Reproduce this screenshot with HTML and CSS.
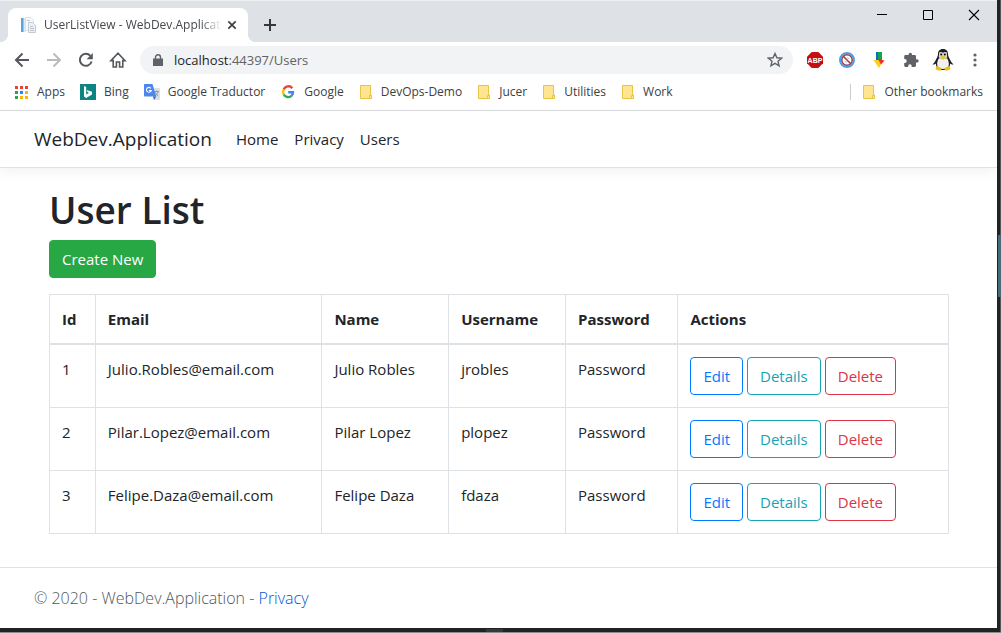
FILE: index.html
```html
<!DOCTYPE html>
<html lang="en">
<head>
<meta charset="utf-8">
<title>UserListView - WebDev.Application</title>
<link rel="stylesheet" href="styles.css">
</head>
<body>
<svg class="sprite" aria-hidden="true">
  <symbol id="folder" viewBox="0 0 14 16"><path d="M1.500 1.500h10v9.500h1v3.500h-11z" fill="#ffe591" stroke="#e8c547"/><path d="M10.500 14.500v-3h2v3z" fill="#ffe591" stroke="#e8c547"/></symbol>
</svg>
<div class="desktop">
  <div class="window">
    <header class="tab-strip">
      <div class="tab">
        <svg class="tab-icon" width="16" height="16" viewBox="0 0 16 16"><path d="M1 1h4v14H1z" fill="#5aa5d8"/><path d="M3.500 1H6v14H3.500z" fill="#dbe9f3"/><path d="M5.500 .5H11l2.500 3v10h-8z" fill="#f6f8fa" stroke="#dde1e5"/><path d="M8.500 5.500h4l3 3v7h-7z" fill="#eef1f4" stroke="#c3cad1"/><path d="M7 3.500h3M10 9.500h3M10 11.500h4M10 13.500h4" stroke="#b9c4ce"/></svg>
        <span class="tab-title">UserListView - WebDev.Application</span>
        <button class="icon-button tab-close" aria-label="Close tab"><svg width="10" height="10" viewBox="0 0 10 10"><path d="M1.300 1.300l7.400 7.400M8.700 1.300L1.300 8.700" stroke="#3c4043" stroke-width="1.700"/></svg></button>
      </div>
      <button class="icon-button new-tab" aria-label="New tab"><svg width="12" height="12" viewBox="0 0 12 12"><path d="M6 0v12M0 6h12" stroke="#35383b" stroke-width="2"/></svg></button>
      <div class="window-controls">
        <button class="icon-button" aria-label="Minimize"><svg width="10" height="10" viewBox="0 0 10 10"><path d="M0 4.500h10" stroke="#000"/></svg></button>
        <button class="icon-button" aria-label="Maximize"><svg width="10" height="10" viewBox="0 0 10 10"><path d="M.5.5h9v9h-9z" fill="none" stroke="#000"/></svg></button>
        <button class="icon-button" aria-label="Close"><svg width="12" height="12" viewBox="0 0 12 12"><path d="M1 1l10 10M11 1L1 11" stroke="#000" stroke-width="1.100"/></svg></button>
      </div>
    </header>

    <div class="toolbar">
      <div class="nav-buttons">
        <button class="icon-button" aria-label="Back"><svg width="16" height="16" viewBox="0 0 16 16"><path d="M15 8H2M8.500 1.500L2 8l6.500 6.500" fill="none" stroke="#55585c" stroke-width="2"/></svg></button>
        <button class="icon-button" aria-label="Forward"><svg width="16" height="16" viewBox="0 0 16 16"><path d="M1 8h13M7.500 1.500L14 8l-6.500 6.500" fill="none" stroke="#b9bbbd" stroke-width="2"/></svg></button>
        <button class="icon-button" aria-label="Reload"><svg width="16" height="16" viewBox="0 0 16 16"><path d="M13.600 9.500A6 6 0 1 1 12.400 3.900" fill="none" stroke="#55585c" stroke-width="2"/><path d="M14.800 1v6.200H8.600z" fill="#55585c"/></svg></button>
        <button class="icon-button" aria-label="Home"><svg width="18" height="18" viewBox="0 0 18 18"><path d="M2 9.600L9 2.200l7 7.400h-2.200V16h-3.200v-5H7.400v5H4.200V9.600z" fill="none" stroke="#55585c" stroke-width="1.600"/></svg></button>
      </div>
      <div class="omnibox">
        <svg width="10" height="13" viewBox="0 0 10 13"><path d="M0 4.500h10V12H0z" fill="#5f6368"/><path d="M2.500 5V3.200a2.500 2.500 0 0 1 5 0V5" fill="none" stroke="#5f6368" stroke-width="1.400"/></svg>
        <span class="address">localhost<span class="address-rest">:44397/Users</span></span>
        <button class="icon-button star" aria-label="Bookmark this page"><svg width="16" height="16" viewBox="0 0 16 16"><path d="M8 1.500l1.900 4.300 4.700.4-3.600 3.100 1.100 4.600L8 11.400l-4.100 2.500L5 9.300 1.400 6.200l4.700-.4z" fill="none" stroke="#5f6368" stroke-width="1.400"/></svg></button>
      </div>
      <div class="extensions">
        <button class="icon-button" aria-label="Adblock Plus"><svg width="16" height="16" viewBox="0 0 16 16"><path d="M4.700 0h6.600L16 4.700v6.600L11.300 16H4.700L0 11.300V4.700z" fill="#c70d0d"/><text class="abp" x="8" y="11" text-anchor="middle">ABP</text></svg></button>
        <button class="icon-button" aria-label="Blocker"><svg width="16" height="16" viewBox="0 0 16 16"><circle cx="8" cy="8" r="7" fill="#fff" stroke="#4ca0ea" stroke-width="2"/><circle cx="8" cy="8" r="5.200" fill="#fff" stroke="#98404b" stroke-width="1.500"/><path d="M4.300 4.300l7.400 7.400" stroke="#98404b" stroke-width="1.600"/><path d="M8 5.500l2.500 1.500M5.500 9L8 10.500" stroke="#b9bfcb"/></svg></button>
        <button class="icon-button" aria-label="Downloads"><svg width="16" height="16" viewBox="0 0 16 16"><path d="M5 0h3v8H5z" fill="#1768c5"/><path d="M7 0h4v8H7z" fill="#12a64a"/><path d="M5 4l3 4H5z" fill="#1768c5"/><path d="M2.500 8H8l2.500 3.500L8 16z" fill="#ffcd18"/><path d="M7 7l6.500 1.500-3.500 4z" fill="#f22e24"/></svg></button>
        <button class="icon-button" aria-label="Extensions"><svg width="16" height="16" viewBox="0 0 16 16"><path d="M14 7.200h-1V4.500c0-.8-.6-1.400-1.400-1.400H9V2.400a1.700 1.700 0 0 0-3.400 0v.7H2.500c-.8 0-1.300.6-1.300 1.400v2.600h.6a1.900 1.900 0 0 1 0 3.800h-.6v2.700c0 .8.500 1.300 1.300 1.300h2.700v-.8a1.700 1.700 0 0 1 3.500 0v.8h2.900c.8 0 1.400-.5 1.400-1.300v-3H14a1.700 1.700 0 0 0 0-3.400z" fill="#5f6368"/></svg></button>
        <button class="icon-button" aria-label="Profile"><svg width="22" height="22" viewBox="0 0 22 22"><path d="M11 0c3.600 0 5 2.300 5 5.300 0 2 1.300 3.900 2.400 6 .7 1.500 1.700 3.400 3.100 4-1.200.7-2.500.1-3.400-.8 0 4.700-2.800 6.500-7.100 6.500s-7.100-1.800-7.100-6.500c-.9.900-2.200 1.500-3.400.8 1.400-.6 2.400-2.500 3.100-4C4.700 9.200 6 7.300 6 5.300 6 2.300 7.400 0 11 0z" fill="#1d1e21"/><path d="M7 9.200h8c2.800 4 3.200 10.800-4 10.800S4.200 13.200 7 9.200z" fill="#f0f0ee"/><path d="M7.200 3.200L10.200 3l.8 1.500.8-1.500 3 .2.400 5.300-4.200 2-4.200-2z" fill="#d5d9dc"/><circle cx="9.200" cy="5.500" r="1"/><circle cx="12.800" cy="5.500" r="1"/><path d="M8.800 7.600L11 6.600l2.200 1v1.600L11 10.800 8.800 9.200z" fill="#e7c61e"/><path d="M4.500 16.800l5.300 2.500-.7 2.500c-2.400-.2-4.600-.6-5.600-1.800zM17.500 16.800l-5.300 2.500.7 2.500c2.400-.2 4.600-.6 5.600-1.800z" fill="#e8bd1c"/></svg></button>
        <button class="icon-button" aria-label="Menu"><svg width="4" height="14" viewBox="0 0 4 14"><g fill="#5f6368"><circle cx="2" cy="2" r="1.600"/><circle cx="2" cy="7" r="1.600"/><circle cx="2" cy="12" r="1.600"/></g></svg></button>
      </div>
    </div>

    <nav class="bookmarks" aria-label="Bookmarks">
      <a href="#"><svg width="16" height="16" viewBox="0 0 16 16"><g fill="#e94235"><path d="M2 2h3v3H2zM7 2h3v3H7zM12 2h3v3h-3z"/></g><path d="M2 7h3v3H2zM2 12h3v3H2z" fill="#2ba24c"/><path d="M7 7h3v3H7z" fill="#1a8cff"/><path d="M12 7h3v3h-3zM12 12h3v3h-3zM7 12h3v3H7z" fill="#fbb605"/></svg>Apps</a>
      <a href="#"><svg width="16" height="16" viewBox="0 0 16 16"><path d="M0 0h16v16H0z" fill="#0c8484"/><path d="M4 2l2.200.9v7.500l2.800-1.500-1.400-.7-.9-2.300 5.300 1.900v2.600L6.200 14 4 12.600z" fill="#fff"/></svg>Bing</a>
      <a href="#"><svg width="16" height="16" viewBox="0 0 16 16"><path d="M6 4h9c.6 0 1 .4 1 1v10c0 .6-.4 1-1 1h-5z" fill="#dce0e5"/><path d="M1 0h7.500l3.800 12.500H1c-.6 0-1-.4-1-1V1c0-.6.400-1 1-1z" fill="#4c87ee"/><path d="M9 12.500h3.300L10 16z" fill="#3367d6"/><path d="M6.800 4.300a2.400 2.400 0 1 0 .4 2.200H5" fill="none" stroke="#fff" stroke-width="1.100"/><path d="M10.500 7.500h4.500M12.500 6.500v1M14 8c-.5 2-1.800 3.500-2.600 4M11.500 8.500c.5 1.700 1.600 2.800 2.700 3.500" fill="none" stroke="#87919c" stroke-width=".9"/></svg>Google Traductor</a>
      <a href="#"><svg width="16" height="16" viewBox="0 0 16 16"><g fill="none" stroke-width="2.400"><path d="M12.300 4.200A5 5 0 0 0 3.700 5.500" stroke="#ea4335"/><path d="M3.700 5.500a5 5 0 0 0 0 5" stroke="#fbbc05"/><path d="M3.700 10.500a5 5 0 0 0 7.700 1.300" stroke="#34a853"/><path d="M11.400 11.800A4.800 4.800 0 0 0 13 8.200H8.200" stroke="#4285f4"/></g></svg>Google</a>
      <a href="#"><svg class="folder" width="14" height="16"><use href="#folder"/></svg>DevOps-Demo</a>
      <a href="#"><svg class="folder" width="14" height="16"><use href="#folder"/></svg>Jucer</a>
      <a href="#"><svg class="folder" width="14" height="16"><use href="#folder"/></svg>Utilities</a>
      <a href="#"><svg class="folder" width="14" height="16"><use href="#folder"/></svg>Work</a>
      <a class="other" href="#"><svg class="folder" width="14" height="16"><use href="#folder"/></svg>Other bookmarks</a>
    </nav>

    <div class="page">
      <nav class="navbar" aria-label="Main">
        <a class="brand" href="#">WebDev.Application</a>
        <a href="#">Home</a>
        <a href="#">Privacy</a>
        <a href="#">Users</a>
      </nav>
      <main class="content">
        <h1>User List</h1>
        <a class="btn btn-success" href="#">Create New</a>
        <table>
          <colgroup><col class="col-id"><col class="col-email"><col class="col-name"><col class="col-username"><col class="col-password"><col></colgroup>
          <thead>
            <tr><th>Id</th><th>Email</th><th>Name</th><th>Username</th><th>Password</th><th>Actions</th></tr>
          </thead>
          <tbody>
            <tr><td>1</td><td>Julio.Robles@email.com</td><td>Julio Robles</td><td>jrobles</td><td>Password</td><td><div class="actions"><a class="btn btn-edit" href="#">Edit</a><a class="btn btn-details" href="#">Details</a><a class="btn btn-delete" href="#">Delete</a></div></td></tr>
            <tr><td>2</td><td>Pilar.Lopez@email.com</td><td>Pilar Lopez</td><td>plopez</td><td>Password</td><td><div class="actions"><a class="btn btn-edit" href="#">Edit</a><a class="btn btn-details" href="#">Details</a><a class="btn btn-delete" href="#">Delete</a></div></td></tr>
            <tr><td>3</td><td>Felipe.Daza@email.com</td><td>Felipe Daza</td><td>fdaza</td><td>Password</td><td><div class="actions"><a class="btn btn-edit" href="#">Edit</a><a class="btn btn-details" href="#">Details</a><a class="btn btn-delete" href="#">Delete</a></div></td></tr>
          </tbody>
        </table>
      </main>
      <footer class="footer">© 2020 - WebDev.Application - <a href="#">Privacy</a></footer>
    </div>
  </div>
</div>
</body>
</html>
```

FILE: styles.css
```css
* {
  box-sizing: border-box;
}

body {
  margin: 0;
  font-family: "Open Sans", "Noto Sans", sans-serif;
  font-size: 15px;
  line-height: 24px;
  color: #212529;
}

a {
  color: inherit;
  text-decoration: none;
}

svg {
  display: block;
  flex: none;
}

.sprite {
  position: absolute;
  width: 0;
  height: 0;
}

.desktop {
  display: flex;
  min-height: 100vh;
  padding: 0 4px 5px 0;
  background:
    linear-gradient(#8d8d8d, #8d8d8d) bottom / 100% 1px no-repeat,
    linear-gradient(#38383c, #38383c) 486px 100% / 17px 4px no-repeat,
    linear-gradient(#4b6a78, #4b6a78) 100% 235px / 3px 62px no-repeat,
    linear-gradient(#55585a, #55585a) 100% 0 / 1px 100% no-repeat,
    #222;
}

.window {
  display: flex;
  flex: 1;
  flex-direction: column;
  min-width: 0;
  background: #fff;
}

.icon-button {
  display: flex;
  align-items: center;
  justify-content: center;
  padding: 0;
  border: 0;
  background: none;
}

.tab-strip {
  display: flex;
  height: 42px;
  padding: 7px 0 0 8px;
  border-top: 1px solid #eff1f2;
  background: #dee1e6;
}

.tab {
  position: relative;
  display: flex;
  align-items: center;
  gap: 8px;
  width: 240px;
  padding: 0 10px 0 12px;
  border-radius: 8px 8px 0 0;
  background: #fff;
}

/* Curved feet on both sides of the active tab. */
.tab::before,
.tab::after {
  content: "";
  position: absolute;
  bottom: 0;
  width: 8px;
  height: 8px;
}

.tab::before {
  right: 100%;
  background: radial-gradient(circle at 0 0, transparent 8px, #fff 8px);
}

.tab::after {
  left: 100%;
  background: radial-gradient(circle at 100% 0, transparent 8px, #fff 8px);
}

.tab-title {
  flex: 1;
  overflow: hidden;
  font-size: 12px;
  line-height: 16px;
  white-space: nowrap;
  color: #45484c;
  mask-image: linear-gradient(90deg, #000 88%, transparent);
}

.tab-close {
  width: 12px;
  height: 16px;
}

.tab-title + .tab-close {
  margin-left: -4px;
}

.new-tab {
  width: 28px;
  margin-left: 8px;
}

.window-controls {
  display: flex;
  height: 13px;
  margin-left: auto;
}

.window-controls .icon-button {
  width: 46px;
}

.toolbar {
  display: flex;
  align-items: center;
  gap: 6px;
  height: 36px;
  padding: 0 6px;
}

.nav-buttons {
  display: flex;
}

.nav-buttons .icon-button {
  width: 32px;
  height: 28px;
}

.omnibox {
  display: flex;
  flex: 1;
  align-items: center;
  gap: 11px;
  height: 28px;
  padding: 0 10px 0 13px;
  border-radius: 14px;
  background: #f1f3f4;
}

.address {
  flex: 1;
  font-size: 13px;
  line-height: 20px;
}

.address-rest {
  color: #5f6368;
}

.extensions {
  display: flex;
}

.extensions .icon-button {
  width: 32px;
  height: 28px;
}

.abp {
  font: bold 7px "Liberation Sans", sans-serif;
  fill: #fff;
}

.bookmarks {
  display: flex;
  align-items: center;
  gap: 15px;
  height: 33px;
  padding: 0 14px 5px 13px;
  border-bottom: 1px solid #dadce0;
  font-size: 12px;
  line-height: 16px;
  white-space: nowrap;
  color: #3c4043;
}

.bookmarks a {
  display: flex;
  align-items: center;
  gap: 8px;
}

.bookmarks .other {
  margin-left: auto;
  padding-left: 11px;
  border-left: 1px solid #ccc;
}

.page {
  display: flex;
  flex: 1;
  flex-direction: column;
}

.navbar {
  display: flex;
  align-items: center;
  gap: 16px;
  height: 57px;
  padding: 0 34px;
  border-bottom: 1px solid #dee2e6;
  box-shadow: 0 4px 12px rgba(0, 0, 0, 0.05);
}

.brand {
  margin-right: 8px;
  font-size: 19px;
}

.content {
  flex: 1;
  padding: 18px 48px 0 49px;
}

h1 {
  margin: 0 0 6px;
  font-size: 37px;
  font-weight: 600;
  line-height: 48px;
}

.btn {
  display: inline-block;
  padding: 6px 12px;
  border: 1px solid;
  border-radius: 4px;
}

.btn-success {
  border-color: #28a745;
  background: #28a745;
  color: #fff;
}

.btn-edit {
  color: #007bff;
}

.btn-details {
  color: #17a2b8;
}

.btn-delete {
  color: #dc3545;
}

table {
  width: 100%;
  margin-top: 16px;
  border-collapse: collapse;
  table-layout: fixed;
}

.col-id {
  width: 5.1%;
}

.col-email {
  width: 25.2%;
}

.col-name {
  width: 14.1%;
}

.col-username {
  width: 13%;
}

.col-password {
  width: 12.5%;
}

th,
td {
  padding: 12px;
  border: 1px solid #dee2e6;
  text-align: left;
  vertical-align: top;
}

th {
  border-bottom-width: 2px;
  font-weight: 700;
}

.actions {
  display: flex;
  gap: 4px;
}

.footer {
  padding: 18px 34px;
  border-top: 1px solid #dee2e6;
  font-size: 16px;
  font-weight: 300;
  color: #50575e;
}

.footer a {
  color: #0056d6;
}
```
